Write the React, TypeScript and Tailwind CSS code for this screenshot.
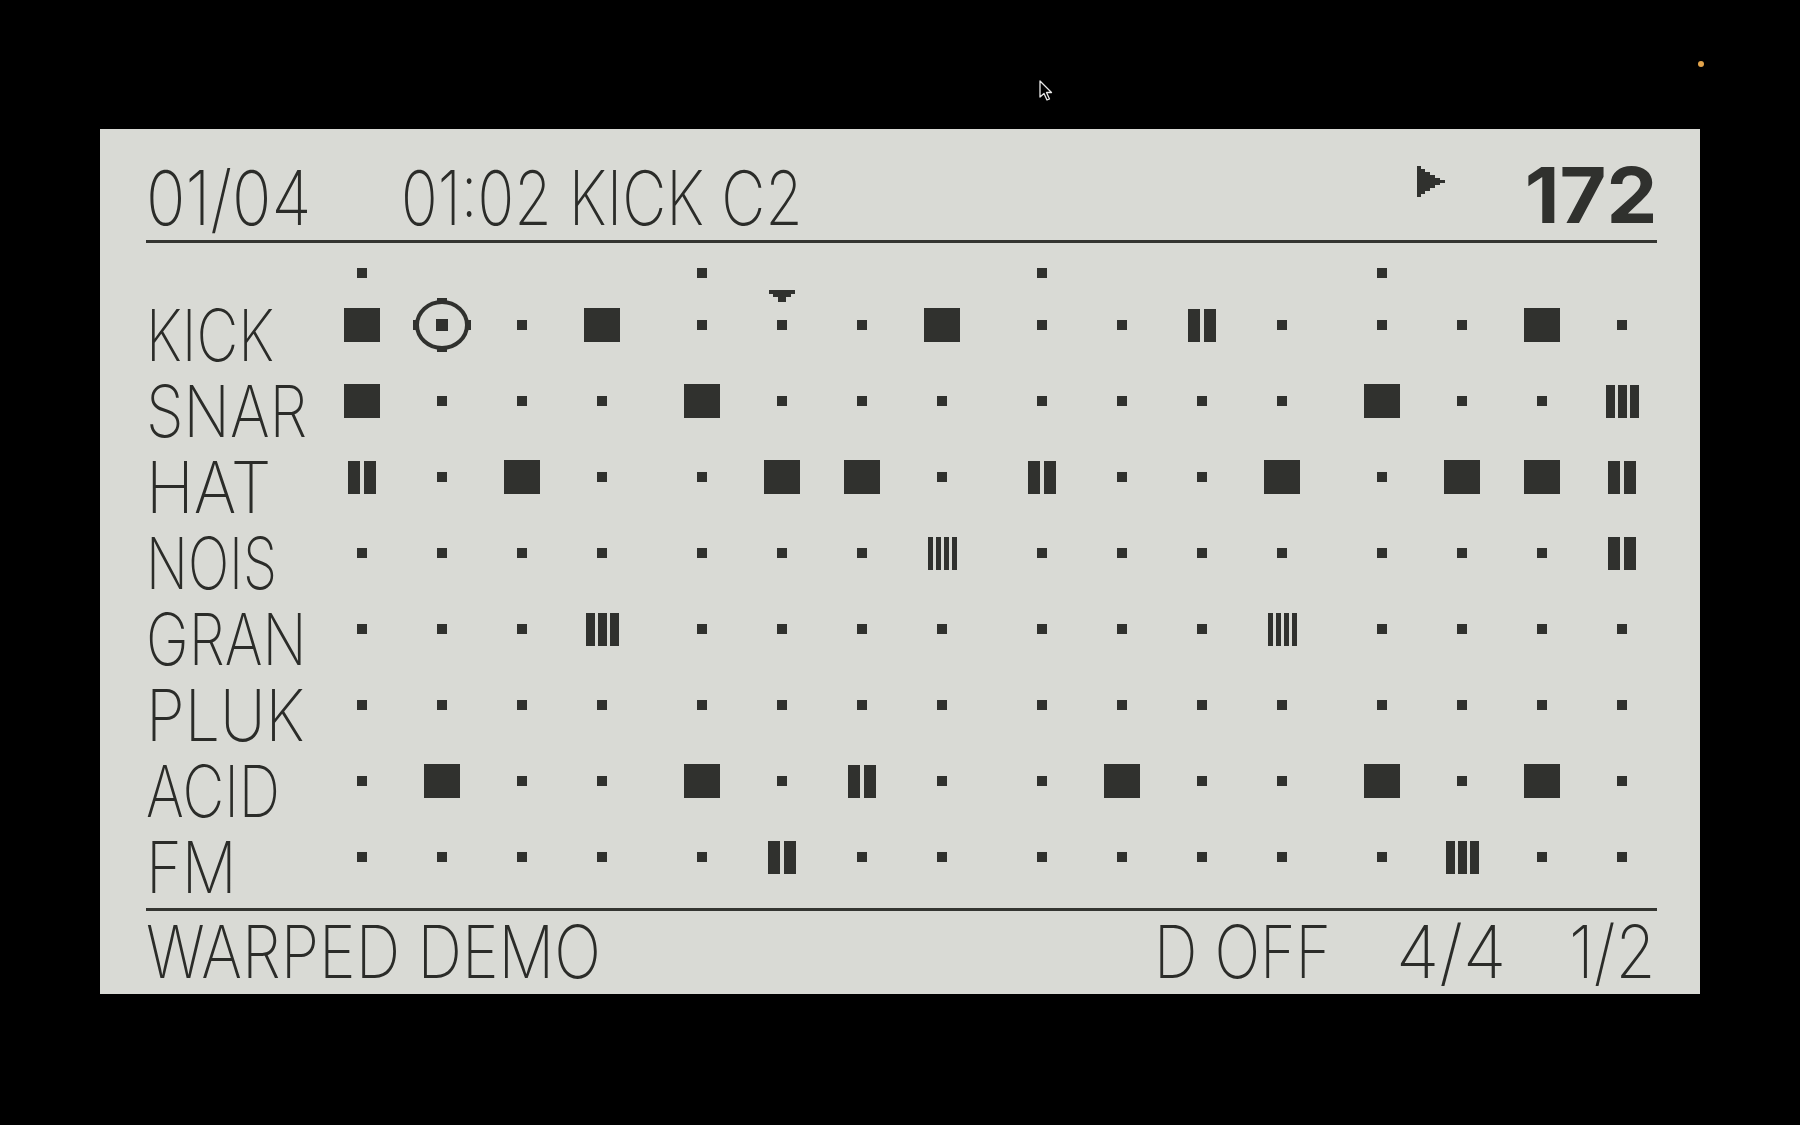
import React from "react";

// '.' dot, 'B' block, '2' / '3' / '4' ratchet bars, 'C' cursor
// fit: horizontal squeeze per label so Inter matches the LCD font widths
const TRACKS: { name: string; steps: string; fit: string }[] = [
  { name: "KICK", steps: "BC.B...B..2...B.", fit: "scale-x-[0.80]" },
  { name: "SNAR", steps: "B...B.......B..3", fit: "scale-x-[0.84]" },
  { name: "HAT", steps: "2.B..BB.2..B.BB2", fit: "scale-x-[0.90]" },
  { name: "NOIS", steps: ".......4.......2", fit: "scale-x-[0.76]" },
  { name: "GRAN", steps: "...3.......4....", fit: "scale-x-[0.80]" },
  { name: "PLUK", steps: "................", fit: "scale-x-[0.87]" },
  { name: "ACID", steps: ".B..B.2..B..B.B.", fit: "scale-x-[0.80]" },
  { name: "FM", steps: ".....2.......3..", fit: "scale-x-[0.85]" },
];

const PLAYHEAD = 5;

function Bars({ n }: { n: number }) {
  if (n === 2)
    return (
      <div className="flex gap-[4px]">
        <div className="w-[12px] h-[33px] bg-[#30312e]" />
        <div className="w-[12px] h-[33px] bg-[#30312e]" />
      </div>
    );
  if (n === 3)
    return (
      <div className="flex gap-[3px]">
        <div className="w-[9px] h-[33px] bg-[#30312e]" />
        <div className="w-[9px] h-[33px] bg-[#30312e]" />
        <div className="w-[9px] h-[33px] bg-[#30312e]" />
      </div>
    );
  return (
    <div className="flex gap-[3px]">
      <div className="w-[5px] h-[33px] bg-[#30312e]" />
      <div className="w-[5px] h-[33px] bg-[#30312e]" />
      <div className="w-[5px] h-[33px] bg-[#30312e]" />
      <div className="w-[5px] h-[33px] bg-[#30312e]" />
    </div>
  );
}

function CursorRing() {
  return (
    <div className="relative w-[58px] h-[56px] flex items-center justify-center">
      <svg width="58" height="56" viewBox="0 0 58 56" className="absolute inset-0">
        <ellipse cx="29" cy="28" rx="25" ry="23" fill="none" stroke="#30312e" strokeWidth="4" />
        <rect x="24" y="1" width="10" height="4" fill="#30312e" />
        <rect x="24" y="51" width="10" height="4" fill="#30312e" />
        <rect x="0" y="23" width="4" height="10" fill="#30312e" />
        <rect x="54" y="23" width="4" height="10" fill="#30312e" />
      </svg>
      <div className="w-[12px] h-[12px] bg-[#30312e]" />
    </div>
  );
}

function Step({ kind, playhead }: { kind: string; playhead?: boolean }) {
  let body: React.ReactNode = <div className="w-[10px] h-[10px] bg-[#30312e]" />;
  if (kind === "B") body = <div className="w-[36px] h-[34px] bg-[#30312e]" />;
  if (kind === "2") body = <Bars n={2} />;
  if (kind === "3") body = <Bars n={3} />;
  if (kind === "4") body = <Bars n={4} />;
  if (kind === "C") body = <CursorRing />;
  return (
    <div className="relative w-[80px] h-[76px] shrink-0 flex items-center justify-center">
      {playhead && (
        <svg width="26" height="12" viewBox="0 0 26 12" className="absolute top-[3px] left-[27px]">
          <path d="M0 0H26V4H22V7H17V12H9V7H4V4H0Z" fill="#30312e" />
        </svg>
      )}
      {body}
    </div>
  );
}

function StepGrid({ steps, first }: { steps: string; first?: boolean }) {
  const groups = [0, 1, 2, 3];
  return (
    <div className="flex gap-[20px] shrink-0">
      {groups.map((g) => (
        <div key={g} className="flex">
          {steps
            .slice(g * 4, g * 4 + 4)
            .split("")
            .map((s, i) => (
              <Step key={i} kind={s} playhead={first && g * 4 + i === PLAYHEAD} />
            ))}
        </div>
      ))}
    </div>
  );
}

const lcd = "font-['Inter','Liberation_Sans',sans-serif] font-extralight text-[#2b2c29]";

export default function App() {
  return (
    <div className="relative min-h-screen bg-black pt-[129px] pl-[100px]">
      {/* desktop leftovers */}
      <div className="absolute left-[1698px] top-[61px] w-[6px] h-[6px] rounded-full bg-[#e3a44c]" />
      <svg width="14" height="22" viewBox="0 0 14 22" className="absolute left-[1039px] top-[80px]">
        <path d="M1 1V17L5 13.5L8 20L10.5 19L7.5 12.5H12.5Z" fill="#000" stroke="#e8e8e8" strokeWidth="1.3" strokeLinejoin="round" />
      </svg>

      <div className={`w-[1600px] h-[865px] bg-[#d9dad5] pl-[46px] pr-[43px] ${lcd}`}>
        {/* header */}
        <div className="flex items-start justify-between pt-[31px] h-[111px]">
          <div className="flex">
            <div className="w-[255px]">
              <span className="inline-block origin-left scale-x-[0.87] text-[75px] leading-none">01/04</span>
            </div>
            <div className="whitespace-nowrap">
              <span className="inline-block origin-left scale-x-[0.81] text-[75px] leading-none">01:02 KICK C2</span>
            </div>
          </div>
          <div className="flex items-start">
            <svg width="32" height="31" viewBox="0 0 32 31" className="mt-[6px] mr-[74px]">
              <path d="M0 0H4V3H8V6H13V9H18V12H23V14H28V17H23V19H18V22H13V25H8V28H4V31H0Z" fill="#30312e" />
            </svg>
            <div className="w-[134px] text-right -mt-[3px]">
              <span className="inline-block origin-right scale-x-[1.05] text-[77px] leading-none font-bold text-[#30312e]">172</span>
            </div>
          </div>
        </div>
        <div className="h-[3px] bg-[#343531]" />

        {/* beat markers */}
        <div className="flex h-[44px]">
          <div className="w-[176px] shrink-0" />
          <div className="flex gap-[20px] shrink-0">
            {[0, 1, 2, 3].map((g) => (
              <div key={g} className="flex">
                <div className="w-[80px] flex justify-center pt-[25px]">
                  <div className="w-[10px] h-[10px] bg-[#30312e]" />
                </div>
                <div className="w-[240px]" />
              </div>
            ))}
          </div>
        </div>

        {/* tracks */}
        {TRACKS.map((t, idx) => (
          <div key={t.name} className="flex h-[76px]">
            <div className="w-[176px] shrink-0 pt-[20px] whitespace-nowrap">
              <span className={`inline-block origin-left ${t.fit} text-[72px] leading-[56px]`}>{t.name}</span>
            </div>
            <StepGrid steps={t.steps} first={idx === 0} />
          </div>
        ))}

        <div className="mt-[13px] h-[3px] bg-[#343531]" />

        {/* footer */}
        <div className="flex mt-[4px] text-[73px] leading-none whitespace-nowrap">
          <div className="flex-1">
            <span className="inline-block origin-left scale-x-[0.85]">WARPED DEMO</span>
          </div>
          <div className="w-[242px]">
            <span className="inline-block origin-left scale-x-[0.83]">D OFF</span>
          </div>
          <div className="w-[173px]">
            <span className="inline-block origin-left scale-x-[0.97]">4/4</span>
          </div>
          <div className="w-[88px]">
            <span className="inline-block origin-left scale-x-[0.89]">1/2</span>
          </div>
        </div>
      </div>
    </div>
  );
}
